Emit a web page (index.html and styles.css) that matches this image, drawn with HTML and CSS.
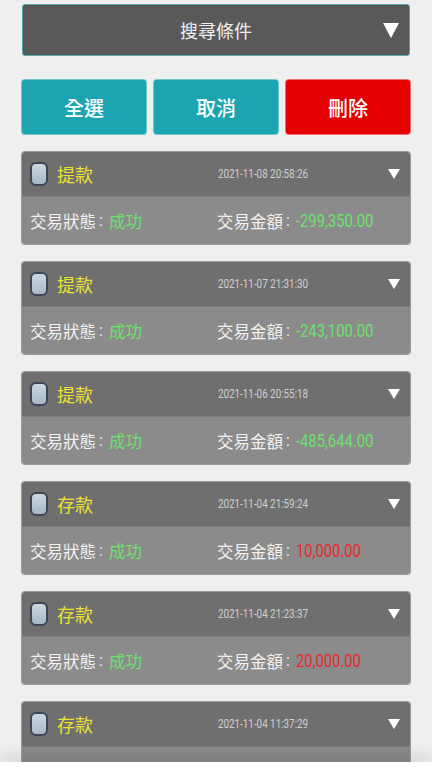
FILE: index.html
```html
<!DOCTYPE html>
<html lang="zh-Hant">
<head>
<meta charset="utf-8">
<link rel="stylesheet" href="styles.css">
</head>
<body>
<div class="page">
  <div class="search">
    <span class="search-label">搜尋條件</span>
    <span class="search-arrow"></span>
  </div>
  <div class="actions">
    <button class="btn teal">全選</button>
    <button class="btn teal">取消</button>
    <button class="btn red">刪除</button>
  </div>
  <div class="list">
    <div class="card">
      <div class="card-head"><span class="check"></span><span class="type">提款</span><span class="date"><span class="nar">2021-11-08 20:58:26</span></span><span class="tri"></span></div>
      <div class="card-body"><div class="col"><span>交易狀態</span><span class="colon">:</span><span class="ok">成功</span></div><div class="col"><span>交易金額</span><span class="colon">:</span><span class="num green"><span class="nar">-299,350.00</span></span></div></div>
    </div>
    <div class="card">
      <div class="card-head"><span class="check"></span><span class="type">提款</span><span class="date"><span class="nar">2021-11-07 21:31:30</span></span><span class="tri"></span></div>
      <div class="card-body"><div class="col"><span>交易狀態</span><span class="colon">:</span><span class="ok">成功</span></div><div class="col"><span>交易金額</span><span class="colon">:</span><span class="num green"><span class="nar">-243,100.00</span></span></div></div>
    </div>
    <div class="card">
      <div class="card-head"><span class="check"></span><span class="type">提款</span><span class="date"><span class="nar">2021-11-06 20:55:18</span></span><span class="tri"></span></div>
      <div class="card-body"><div class="col"><span>交易狀態</span><span class="colon">:</span><span class="ok">成功</span></div><div class="col"><span>交易金額</span><span class="colon">:</span><span class="num green"><span class="nar">-485,644.00</span></span></div></div>
    </div>
    <div class="card">
      <div class="card-head"><span class="check"></span><span class="type">存款</span><span class="date"><span class="nar">2021-11-04 21:59:24</span></span><span class="tri"></span></div>
      <div class="card-body"><div class="col"><span>交易狀態</span><span class="colon">:</span><span class="ok">成功</span></div><div class="col"><span>交易金額</span><span class="colon">:</span><span class="num redt"><span class="nar">10,000.00</span></span></div></div>
    </div>
    <div class="card">
      <div class="card-head"><span class="check"></span><span class="type">存款</span><span class="date"><span class="nar">2021-11-04 21:23:37</span></span><span class="tri"></span></div>
      <div class="card-body"><div class="col"><span>交易狀態</span><span class="colon">:</span><span class="ok">成功</span></div><div class="col"><span>交易金額</span><span class="colon">:</span><span class="num redt"><span class="nar">20,000.00</span></span></div></div>
    </div>
    <div class="card">
      <div class="card-head"><span class="check"></span><span class="type">存款</span><span class="date"><span class="nar">2021-11-04 11:37:29</span></span><span class="tri"></span></div>
      <div class="card-body"><div class="col"><span>交易狀態</span><span class="colon">:</span><span class="ok">成功</span></div><div class="col"><span>交易金額</span><span class="colon">:</span><span class="num redt"><span class="nar">30,000.00</span></span></div></div>
    </div>
  </div>
</div>
<div class="bottom-bar"></div>
</body>
</html>
```
FILE: styles.css
```css
html, body {
  margin: 0;
  padding: 0;
  background: #efefef;
  height: 768px;
  overflow: hidden;
}
body {
  font-family: Roboto, "Noto Sans CJK TC", sans-serif;
}
.page {
  padding: 4px 22px 0 22px;
}
.search {
  height: 50px;
  background: #595959;
  border: 1px solid #4fa7ad;
  border-radius: 3px;
  display: flex;
  align-items: center;
  justify-content: center;
  position: relative;
  margin-bottom: 24px;
}
.search-label {
  color: #f0f0f0;
  font-size: 18px;
  font-family: "Noto Sans CJK TC", sans-serif;
}
.search-arrow {
  position: absolute;
  right: 10px;
  top: 18px;
  width: 0;
  height: 0;
  border-left: 8px solid transparent;
  border-right: 8px solid transparent;
  border-top: 15px solid #ffffff;
}
.actions {
  display: grid;
  grid-template-columns: 1fr 1fr 1fr;
  gap: 8px;
  margin-bottom: 18px;
}
.btn {
  height: 54px;
  border: none;
  border-radius: 3px;
  color: #ffffff;
  font-family: "Noto Sans CJK TC", sans-serif;
  font-size: 20px;
  font-weight: 500;
  padding: 0;
}
.teal {
  background: #1ba5b1;
  box-shadow: 0 0 0 1px #6cc6cc;
}
.red {
  background: #e40000;
  box-shadow: 0 0 0 1px #f07070;
}
.list {
  display: flex;
  flex-direction: column;
  gap: 18px;
}
.card {
  border-radius: 3px;
  overflow: hidden;
  box-shadow: 0 0 0 1px #9a9a9a;
}
.card-head {
  height: 44px;
  background: #6f6f6f;
  display: flex;
  align-items: center;
  padding: 0 8px;
  border-bottom: 1px solid #7c7c7c;
}
.check {
  width: 14px;
  height: 20px;
  border: 2px solid #3c4654;
  border-radius: 6px;
  background: linear-gradient(180deg, #cdd8e0 0%, #a7b8c6 100%);
  margin-right: 9px;
  flex: none;
}
.type {
  color: #ebe232;
  font-size: 18px;
  font-family: "Noto Sans CJK TC", sans-serif;
  width: 161px;
}
.date {
  color: #cfcfcf;
  font-size: 12px;
  flex: 1;
}
.nar {
  display: inline-block;
  transform: scaleX(0.82);
  transform-origin: left center;
  white-space: nowrap;
}
.tri {
  width: 0;
  height: 0;
  border-left: 6px solid transparent;
  border-right: 6px solid transparent;
  border-top: 10px solid #ffffff;
  margin-right: 2px;
}
.card-body {
  height: 47px;
  background: #8b8b8b;
  display: flex;
  align-items: center;
  padding: 0 8px;
  color: #f2f2f2;
  font-size: 16.5px;
  font-family: "Noto Sans CJK TC", sans-serif;
}
.col {
  display: flex;
  align-items: center;
  white-space: nowrap;
}
.col:first-child {
  width: 187px;
}
.colon {
  font-family: Roboto, sans-serif;
  margin: 0 6px 0 3px;
}
.ok {
  color: #6ee06e;
}
.num {
  font-family: Roboto, sans-serif;
  font-size: 18px;
}
.green {
  color: #6ee06e;
}
.redt {
  color: #e52a2a;
}
.bottom-bar {
  position: fixed;
  left: 0;
  right: 0;
  bottom: 0;
  height: 6px;
  background: #ffffff;
  box-shadow: 0 -6px 14px rgba(0, 0, 0, 0.18);
}
```
